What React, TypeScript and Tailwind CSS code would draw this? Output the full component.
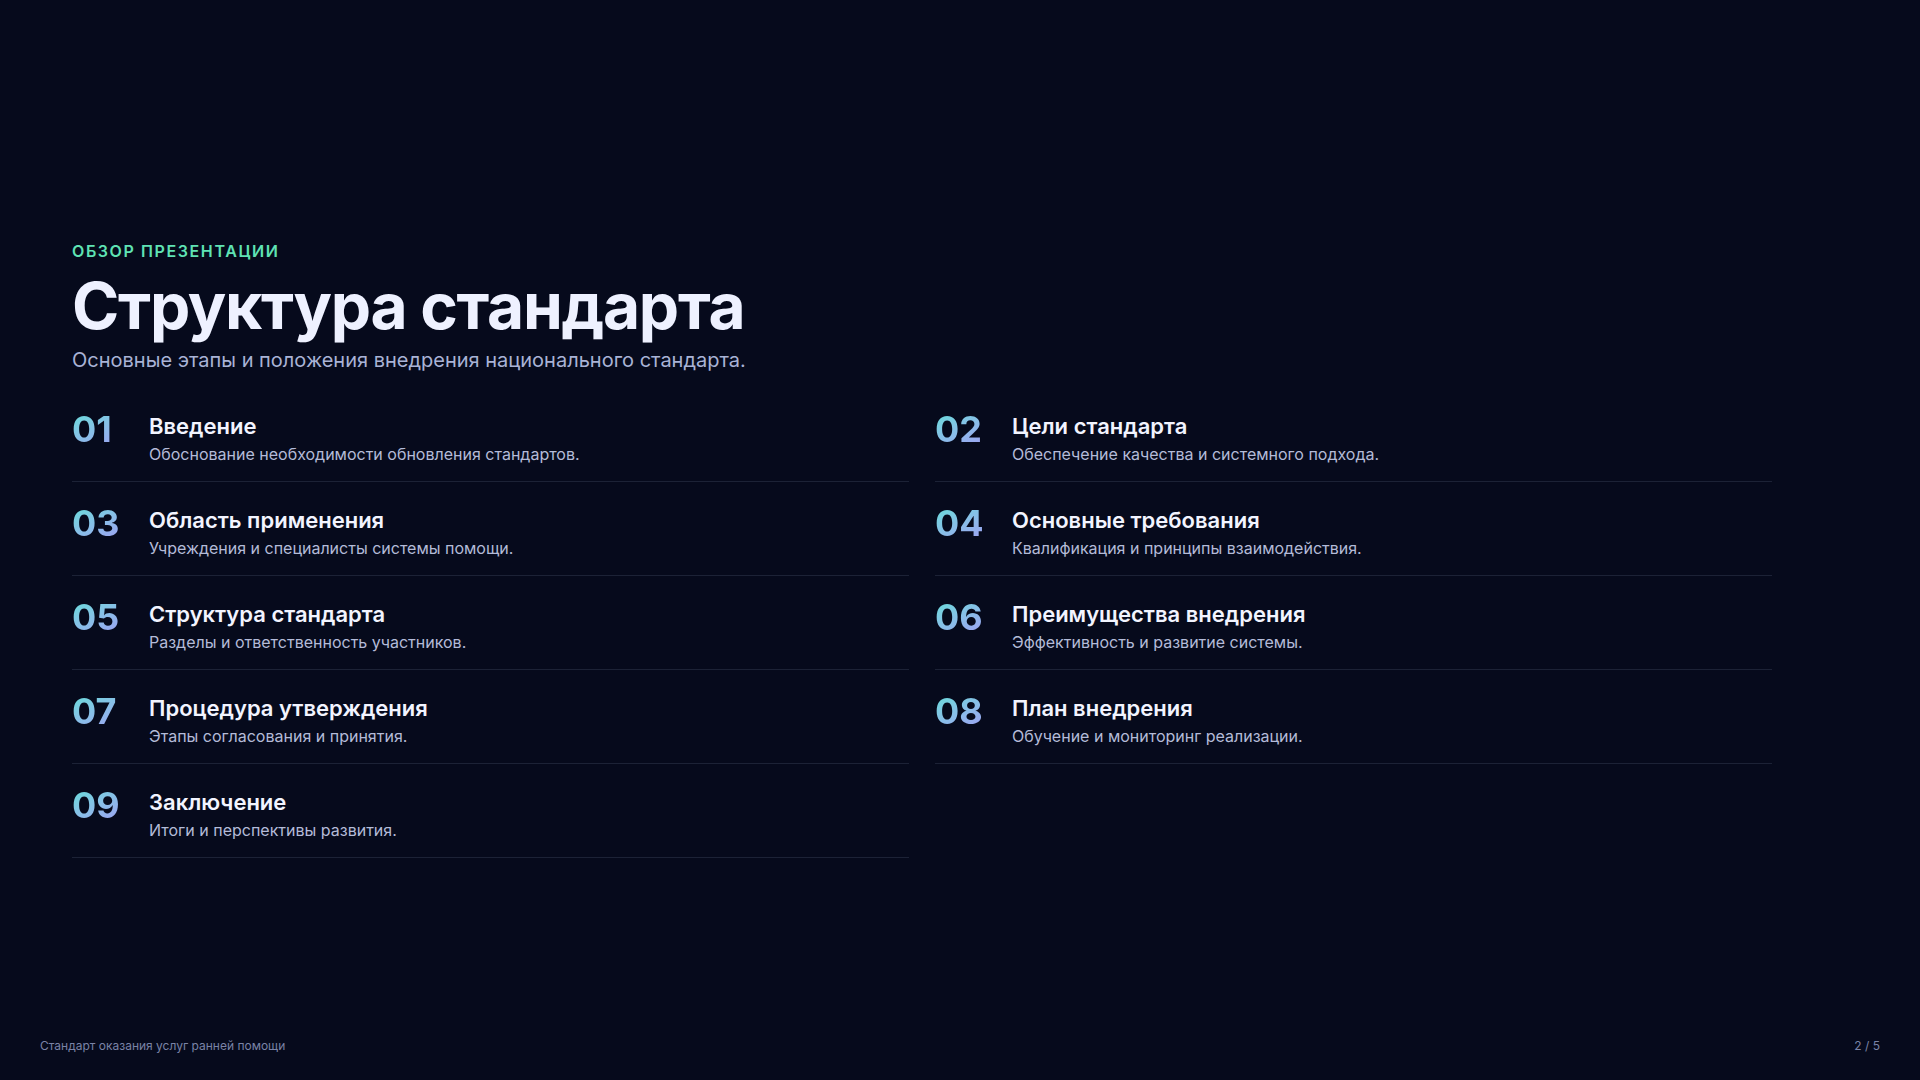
import React from 'react';

const items = [
  ['01', 'Введение', 'Обоснование необходимости обновления стандартов.'],
  ['02', 'Цели стандарта', 'Обеспечение качества и системного подхода.'],
  ['03', 'Область применения', 'Учреждения и специалисты системы помощи.'],
  ['04', 'Основные требования', 'Квалификация и принципы взаимодействия.'],
  ['05', 'Структура стандарта', 'Разделы и ответственность участников.'],
  ['06', 'Преимущества внедрения', 'Эффективность и развитие системы.'],
  ['07', 'Процедура утверждения', 'Этапы согласования и принятия.'],
  ['08', 'План внедрения', 'Обучение и мониторинг реализации.'],
  ['09', 'Заключение', 'Итоги и перспективы развития.'],
];

const App: React.FC = () => {
  return (
    <div
      className="relative w-full h-[1080px] bg-[#060a1c] overflow-hidden"
      style={{ fontFamily: 'Inter, "Noto Sans", sans-serif' }}
    >
      <div className="pl-[72px] pt-[241px] w-[1772px]">
        <div className="text-[16px] leading-[20px] font-semibold tracking-[0.1em] text-[#5fe3b4]">
          ОБЗОР ПРЕЗЕНТАЦИИ
        </div>
        <h1 className="mt-[9px] text-[64px] leading-[72px] font-bold tracking-[-0.02em] text-[#eef1ff]">
          Структура стандарта
        </h1>
        <p className="mt-[4px] text-[20px] leading-[28px] text-[#a9b3d6]">
          Основные этапы и положения внедрения национального стандарта.
        </p>
        <div className="mt-[14px] grid grid-cols-2 gap-x-[26px]">
          {items.map(([n, t, d]) => (
            <div key={n} className="flex items-start border-b border-[#1c2236] pt-[21px] pb-[15px] h-[94px]">
              <div className="w-[77px] shrink-0 text-[36px] leading-[40px] font-bold bg-gradient-to-br from-[#5ee0d8] to-[#a78bfa] bg-clip-text text-transparent">
                {n}
              </div>
              <div className="pt-[3px]">
                <div className="text-[22px] leading-[28px] font-semibold text-[#f2f4ff]">{t}</div>
                <div className="mt-[2px] text-[16px] leading-[24px] text-[#b4bbd8]">{d}</div>
              </div>
            </div>
          ))}
        </div>
      </div>
      <div className="absolute left-[40px] right-[40px] bottom-[25px] flex justify-between text-[12px] text-[#7a83a6]">
        <span>Стандарт оказания услуг ранней помощи</span>
        <span>2 / 5</span>
      </div>
    </div>
  );
};

export default App;
